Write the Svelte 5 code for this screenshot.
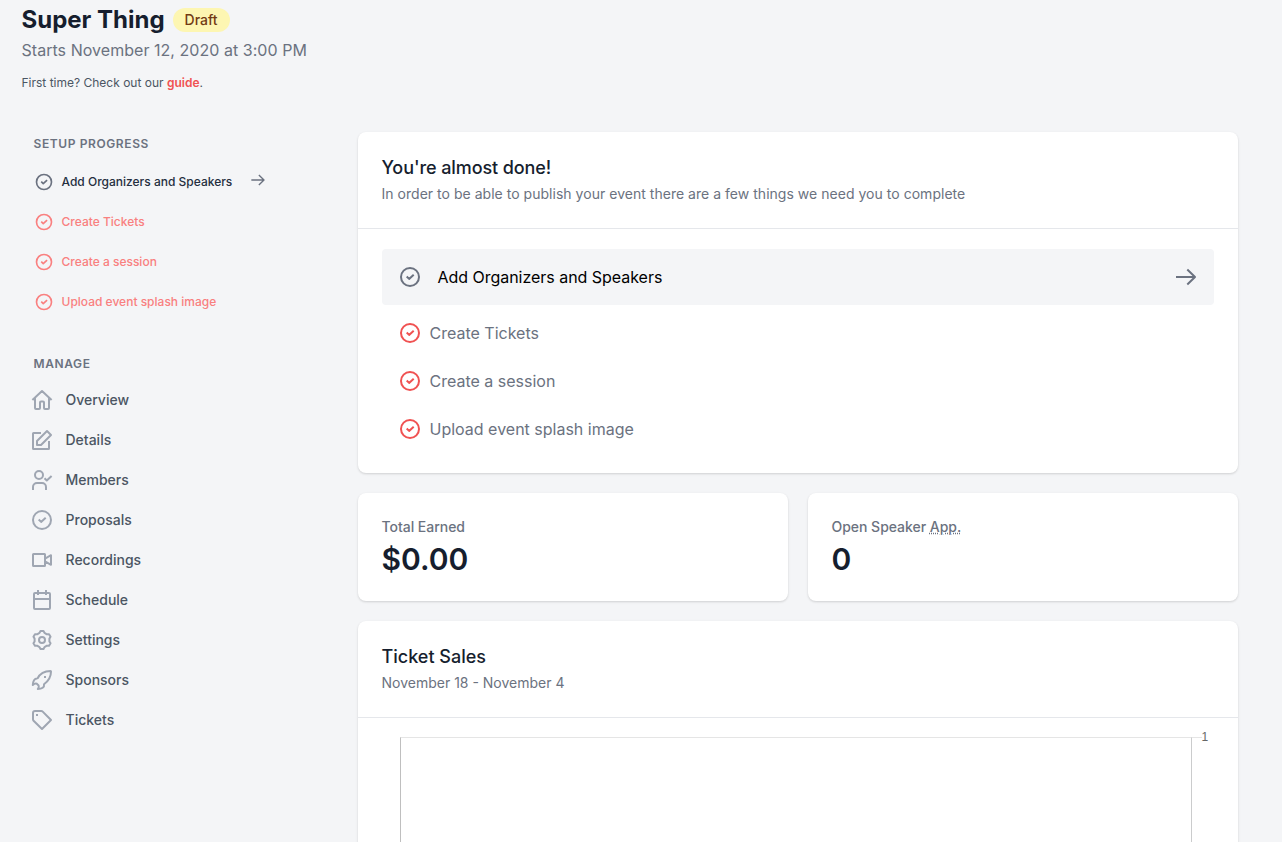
<script>
  const steps = ['Create Tickets', 'Create a session', 'Upload event splash image'];

  function gearPath() {
    const tooth = [[-2.5, -7.1], [-1.5, -9], [1.5, -9], [2.5, -7.1]];
    const points = [];
    for (let i = 0; i < 6; i++) {
      const a = (i * Math.PI) / 3;
      for (const [x, y] of tooth) {
        const px = 12 + x * Math.cos(a) - y * Math.sin(a);
        const py = 12 + x * Math.sin(a) + y * Math.cos(a);
        points.push(`${px.toFixed(2)} ${py.toFixed(2)}`);
      }
    }
    return `M${points.join('L')}z`;
  }

  const check = 'M12 3a9 9 0 1 0 0 18a9 9 0 1 0 0-18zM8.700 11.500l2.400 2.400l4.600-4.200';
  const arrow = 'M2 12h19M13.300 4.500L21 12l-7.700 7.500';

  const nav = [
    { label: 'Overview', d: 'M2.400 12L12 3l9.600 9M5 10v10a1 1 0 0 0 1 1h3a1 1 0 0 0 1-1v-5.500a1 1 0 0 1 1-1h2a1 1 0 0 1 1 1V20a1 1 0 0 0 1 1h3a1 1 0 0 0 1-1V10' },
    { label: 'Details', d: 'M11 5H3.500a.5.5 0 0 0-.5.5v15a.5.5 0 0 0 .5.5h15a.5.5 0 0 0 .5-.5V13M7 17v-4L17 3l4 4L11 17z' },
    { label: 'Members', d: 'M9 3a4 4 0 1 0 0 8a4 4 0 1 0 0-8zM3 22v-3a4 4 0 0 1 4-4h5a4 4 0 0 1 4 4v3M14.500 10.200l2.300 2.300l4.800-4.500' },
    { label: 'Proposals', d: check },
    { label: 'Recordings', d: 'M3.500 6h11a.5.5 0 0 1 .5.5v11a.5.5 0 0 1-.5.5h-11a.5.5 0 0 1-.5-.5v-11a.5.5 0 0 1 .5-.5zM15.500 10.300L21 7.200v9.600l-5.500-3.100' },
    { label: 'Schedule', d: 'M5 5h14a1 1 0 0 1 1 1v14a1 1 0 0 1-1 1H5a1 1 0 0 1-1-1V6a1 1 0 0 1 1-1zM4 11h16M8 2v5M16 2v5' },
    { label: 'Settings', d: gearPath() + 'M12 9a3 3 0 1 0 0 6a3 3 0 1 0 0-6z' },
    { label: 'Sponsors', d: 'M7.500 10.500C10 5.500 14 3 20.500 3q.5 0 .5.5C21 9.500 18.500 13 14 16.300c.6 3-2 4.700-6.200 4.700q1.600-2 .8-3.600l-1.800-1.700q-2-.6-4 1.300c.2-4 1.500-6.700 4.700-6.500M15 8v2' },
    { label: 'Tickets', d: 'M3 5a2 2 0 0 1 2-2h6.300a2 2 0 0 1 1.400.6L21 12l-9 9l-8.400-8.300a2 2 0 0 1-.6-1.400zM7 6v2' },
  ];
</script>

{#snippet icon(d, size, cls)}
  <svg class={cls} width={size} height={size} viewBox="0 0 24 24" fill="none" stroke="currentColor" stroke-width="2" stroke-linejoin="round"><path {d} /></svg>
{/snippet}

<div class="page">
  <header>
    <div class="title-row">
      <h1>Super Thing</h1>
      <span class="badge">Draft</span>
    </div>
    <p class="starts">Starts November 12, 2020 at 3:00 PM</p>
    <p class="hint">First time? Check out our <a href="#guide">guide</a>.</p>
  </header>

  <div class="columns">
    <aside>
      <h3>Setup progress</h3>
      <ul class="progress">
        <li class="current">
          {@render icon(check, 20, '')}
          <span>Add Organizers and Speakers</span>
          {@render icon(arrow, 16, 'next')}
        </li>
        {#each steps as step}
          <li>{@render icon(check, 20, '')}<span>{step}</span></li>
        {/each}
      </ul>
      <h3>Manage</h3>
      <ul class="nav">
        {#each nav as item}
          <li>{@render icon(item.d, 24, '')}<span>{item.label}</span></li>
        {/each}
      </ul>
    </aside>

    <main>
      <section class="card">
        <div class="card-head">
          <h2 class="tight">You're almost done!</h2>
          <p class="intro">In order to be able to publish your event there are a few things we need you to complete</p>
        </div>
        <div class="todo">
          <div class="todo-current">
            {@render icon(check, 24, '')}
            <span>Add Organizers and Speakers</span>
            {@render icon(arrow, 24, '')}
          </div>
          <ul>
            {#each steps as step}
              <li>{@render icon(check, 24, '')}<span>{step}</span></li>
            {/each}
          </ul>
        </div>
      </section>

      <div class="stats">
        <section class="card stat">
          <p>Total Earned</p>
          <strong>$0.00</strong>
        </section>
        <section class="card stat">
          <p>Open Speaker <abbr>App.</abbr></p>
          <strong>0</strong>
        </section>
      </div>

      <section class="card">
        <div class="card-head">
          <h2>Ticket Sales</h2>
          <p>November 18 - November 4</p>
        </div>
        <div class="chart">
          <div class="plot"></div>
          <div class="tick"></div>
          <span>1</span>
        </div>
      </section>
    </main>
  </div>
</div>

<style>
  :global(body) { background: #f4f5f7; overflow: hidden; }
  .page {
    box-sizing: border-box;
    height: 842px;
    overflow: hidden;
    padding: 2px 44px 0 21.5px;
    font-family: Inter, sans-serif;
    color: #161e2e;
  }
  h1, h2, h3, p, ul { margin: 0; padding: 0; }
  li { list-style: none; }
  svg { display: block; flex: none; }
  header { height: 130px; }
  .title-row { display: flex; align-items: center; height: 36px; gap: 8px; }
  h1 { font-size: 24px; font-weight: 700; line-height: 36px; }
  .badge {
    height: 24px;
    padding: 0 12.500px 0 12px;
    border-radius: 12px;
    background: #fdf6b2;
    color: #723b13;
    font-size: 14px;
    font-weight: 500;
    line-height: 24px;
  }
  .starts { font-size: 16px; line-height: 24px; letter-spacing: 0.04px; color: #6b7280; }
  .hint { margin-top: 12px; font-size: 12px; line-height: 18px; color: #4b5563; }
  .hint a { color: #f05252; font-weight: 600; text-decoration: none; }
  .columns { display: grid; grid-template-columns: 316px 880px; column-gap: 20px; }
  aside { padding-top: 4px; }
  h3 {
    padding-left: 12px;
    font-size: 12px;
    font-weight: 600;
    line-height: 16px;
    letter-spacing: 0.05em;
    text-transform: uppercase;
    color: #6b7280;
  }
  .progress { padding: 10px 0 34px 12px; }
  .progress li {
    display: flex;
    align-items: center;
    gap: 8px;
    height: 40px;
    font-size: 12px;
    font-weight: 500;
    line-height: 16px;
    color: #f98080;
  }
  .progress span { padding-bottom: 1px; }
  .progress .current { color: #6b7280; }
  .progress .current span { color: #252f3f; }
  .progress .current > :global(.next) { margin: -4px 0 0 10px; }
  .nav { padding: 8px 0 0 8px; }
  .nav li {
    display: flex;
    align-items: center;
    gap: 12px;
    height: 40px;
    font-size: 14px;
    font-weight: 500;
    line-height: 20px;
    color: #4b5563;
  }
  .nav li > :global(svg) { color: #9fa6b2; }
  main { display: flex; flex-direction: column; gap: 20px; }
  .card {
    border-radius: 8px;
    background: #fff;
    box-shadow: 0 1px 3px rgba(0, 0, 0, 0.1), 0 1px 2px rgba(0, 0, 0, 0.06);
  }
  .card-head { padding: 24px; border-bottom: 1px solid #e5e7eb; }
  h2 { font-size: 18px; font-weight: 500; line-height: 24px; }
  .tight { letter-spacing: -0.09px; }
  .card-head p { margin-top: 4px; font-size: 14px; line-height: 20px; color: #6b7280; }
  .card-head .intro { letter-spacing: 0.026px; }
  .todo { padding: 20px 24px; font-size: 16px; line-height: 24px; color: #6b7280; }
  .todo-current {
    display: flex;
    align-items: center;
    height: 56px;
    padding: 0 16px;
    margin-bottom: 4px;
    border-radius: 4px;
    background: #f4f5f7;
  }
  .todo-current span { flex: 1; margin-left: 16px; letter-spacing: -0.03px; color: #000; }
  .todo li { display: flex; align-items: center; gap: 8px; height: 48px; padding-left: 16px; }
  .todo li > :global(svg) { color: #f05252; }
  .stats { display: grid; grid-template-columns: 1fr 1fr; gap: 20px; }
  .stat { padding: 24px; }
  .stat p { font-size: 14px; font-weight: 500; line-height: 20px; letter-spacing: -0.03px; color: #6b7280; }
  .stat strong { display: block; margin-top: 4px; font-size: 30px; font-weight: 600; line-height: 36px; }
  abbr { text-decoration: underline dotted; }
  .chart { display: flex; padding: 19px 24px 0 42px; height: 220px; }
  .plot { width: 790px; border: 1px solid #bfbfbf; border-top-color: #e5e5e5; border-right-color: #cbcccd; }
  .tick { width: 10px; border-top: 1px solid #e5e5e5; }
  .chart span {
    margin-top: -7px;
    font-family: "Liberation Sans", Arial, sans-serif;
    font-size: 12px;
    line-height: 14px;
    color: #666;
  }
</style>
